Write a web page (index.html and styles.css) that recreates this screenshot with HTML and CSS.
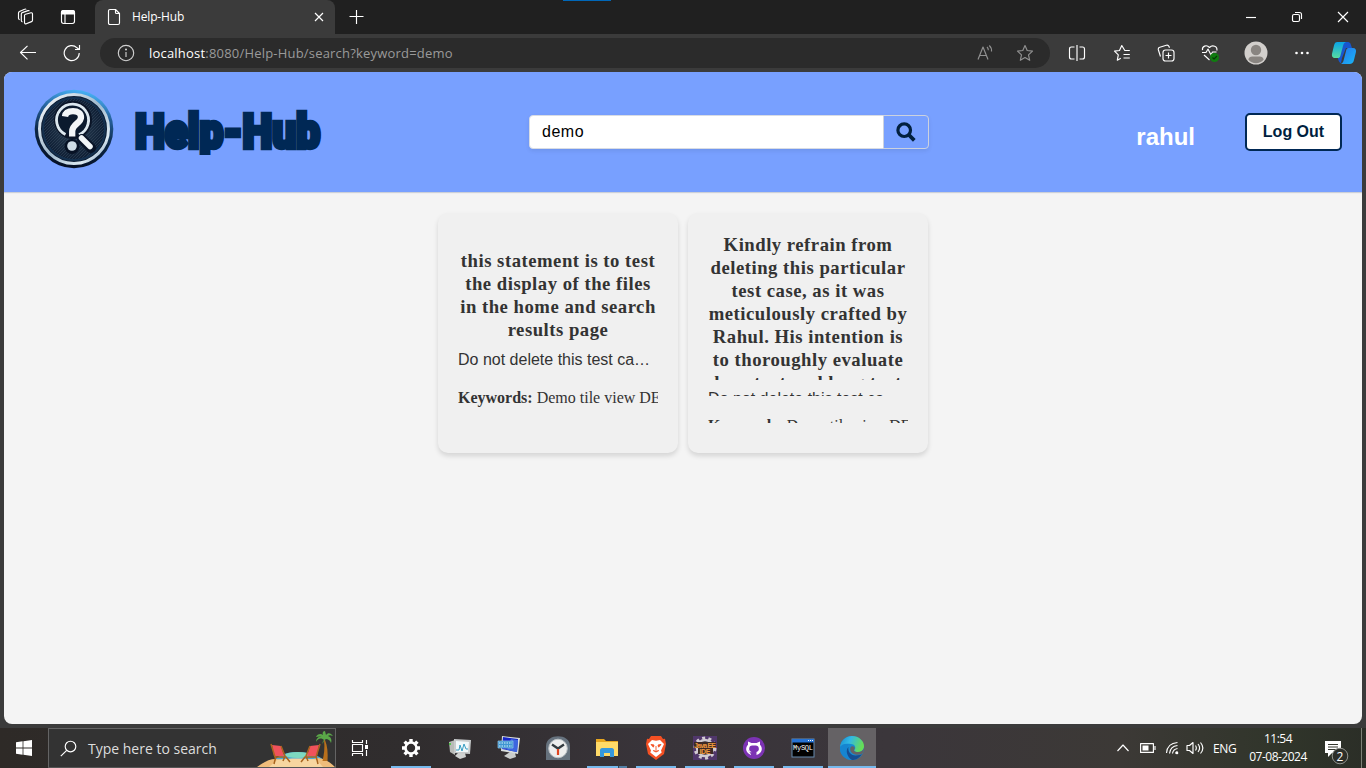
FILE: index.html
```html
<!DOCTYPE html>
<html lang="en">
<head>
<meta charset="utf-8">
<title>Help-Hub</title>
<link rel="stylesheet" href="styles.css">
</head>
<body>
<div class="screen">
  <div class="tabbar">
    <span class="slot w-first"><svg width="18" height="18" viewBox="0 0 18 18" class="line"><path d="M8.500 6.200 14 4.800c.8-.2 1.500.3 1.500 1.200v6.200c0 .7-.4 1.200-1 1.400l-5.200 2.200c-.9.4-1.800-.1-1.800-1.200V7.500c0-.7.4-1.100 1-1.300ZM5.500 13.800c-.8 0-1.200-.5-1.200-1.200V6c0-.7.3-1.200 1-1.400L11 2.600c.6-.2 1.100 0 1.400.5M2.700 11.600C1.900 11.500 1.500 11 1.500 10.300V5c0-.7.3-1.100 1-1.400L7.600 1.200c.6-.3 1.200-.2 1.600.3"/></svg></span>
    <span class="slot w-second"><svg width="16" height="16" viewBox="0 0 16 16" class="line"><rect x="1.500" y="1.500" width="13" height="13" rx="2.200"/><path d="M1.500 3.400C1.500 2 2.200 1.500 3.500 1.500h9c1.300 0 2 .5 2 1.900V5h-13Z" fill="#fff"/><path d="M5 5v9.500"/></svg></span>
    <div class="tab">
      <svg width="14" height="18" viewBox="0 0 14 18" class="line"><path d="M3 1.500h5.500L12.500 5.500V15c0 1-.5 1.500-1.500 1.500H3c-1 0-1.500-.5-1.500-1.500V3c0-1 .5-1.500 1.500-1.500ZM8.500 1.500v3c0 .7.300 1 1 1h3"/></svg>
      <span class="tab-title">Help-Hub</span>
      <svg width="10" height="10" viewBox="0 0 10 10" class="line"><path d="m1 1 8 8M9 1 1 9"/></svg>
    </div>
    <span class="slot w-plus"><svg width="16" height="16" viewBox="0 0 16 16" class="line"><path d="M8.500 1v14M1.500 7.500h14"/></svg></span>
    <div class="accent"></div>
    <div class="window-buttons">
      <span><svg width="12" height="12" viewBox="0 0 12 12" class="line"><path d="M1 6.500h10"/></svg></span>
      <span><svg width="12" height="12" viewBox="0 0 12 12" class="line"><rect x="1.500" y="3.500" width="7" height="7" rx="1.500"/><path d="M4 1.500h4.500c1.300 0 2 .7 2 2V8"/></svg></span>
      <span><svg width="12" height="12" viewBox="0 0 12 12" class="line"><path d="m1 1 10 10M11 1 1 11"/></svg></span>
    </div>
  </div>

  <div class="toolbar">
    <span class="slot w-back"><svg width="18" height="16" viewBox="0 0 18 16" class="line"><path d="M17 7.500H1.500M8.500.8 1.500 7.500l7 6.800"/></svg></span>
    <span class="slot w-reload"><svg width="18" height="18" viewBox="0 0 18 18" class="line"><path d="M16.200 9A7.500 7.500 0 1 1 14 3.800l2 1.700M16.500 1v4.500H12"/></svg></span>
    <div class="address">
      <svg width="18" height="18" viewBox="0 0 18 18" class="line soft"><circle cx="9" cy="9" r="7.700"/><path d="M9 8v5"/><circle cx="9" cy="5.500" r=".5"/></svg>
      <span class="url"><b>localhost</b>:8080/Help-Hub/search?keyword=demo</span>
      <span class="slot w-addr"><svg width="18" height="18" viewBox="0 0 18 18" class="line dim"><path d="M2 15.500 7 3l5 12.500M3.700 11.500h6.500M11 3c1 .9 1.400 1.900 1.300 3.300M13.300 1.500c1.700 1.600 2.500 3.500 2.200 6"/></svg></span>
      <span class="slot w-addr"><svg width="18" height="18" viewBox="0 0 18 18" class="line dim"><path d="m9 1.500 2.200 5 5.300.6-4 3.700 1.200 5.500L9 13.500l-4.700 2.800 1.200-5.500-4-3.700 5.300-.6Z"/></svg></span>
    </div>
    <div class="tools">
      <span class="slot w-split"><svg width="18" height="18" viewBox="0 0 18 18" class="line"><path d="M6.500 3h-3C2.200 3 1.500 3.700 1.500 5v8c0 1.300.7 2 2 2h3M11.500 3h3c1.300 0 2 .7 2 2v8c0 1.300-.7 2-2 2h-3M9 1v16"/></svg></span>
      <span class="slot w-tool"><svg width="18" height="18" viewBox="0 0 18 18" class="line"><path d="M16.800 6.500h-5L8.800 1.500l-2.300 5-5 .6 3.800 3.700-1 5.400 3.500-2M10.500 10.500h6.300M10.500 14h6.300"/></svg></span>
      <span class="slot w-tool"><svg width="18" height="18" viewBox="0 0 18 18" class="line"><rect x="6" y="6" width="11" height="11" rx="2.500"/><path d="M11.500 8.500v6M8.500 11.500h6M3.500 12.500 1.400 6C1 4.500 1.400 3.600 2.800 3.200l6.500-2c1.400-.4 2.200.1 2.700 1.300l.5 1.300"/></svg></span>
      <span class="slot w-tool"><svg width="20" height="20" viewBox="0 0 20 20" class="line"><path d="M2.500 7.200C1.800 3.200 6.500 1.200 9.500 4.500c3-3.300 8.300-1 7.300 3M2 9.500h4L8 6l3 6 1.500-3h4M4 12l5.500 5"/><circle cx="14.500" cy="14.500" r="4.500" fill="#107c10" stroke="none"/><path d="m12.500 14.500 1.500 1.500 3-3" stroke="#073a07"/></svg></span>
      <span class="slot w-person"><svg width="24" height="24" viewBox="0 0 24 24"><circle cx="12" cy="12" r="11.500" fill="#d2cfcc"/><circle cx="12" cy="9" r="5.200" fill="#898581"/><path d="M4.300 18.500c.5-2 2-3 4-3h7.400c2 0 3.500 1 4 3-4 5-11.400 5-15.400 0Z" fill="#898581"/></svg></span>
      <span class="slot w-more"><svg width="16" height="4" viewBox="0 0 16 4" fill="#fff"><circle cx="2.500" cy="2" r="1.300"/><circle cx="8" cy="2" r="1.300"/><circle cx="13.500" cy="2" r="1.300"/></svg></span>
      <span class="slot w-copilot"><svg width="26" height="24" viewBox="0 0 26 24"><defs><linearGradient id="cpA" x2="0" y2="1"><stop stop-color="#08a4e8"/><stop offset="1" stop-color="#58dca0"/></linearGradient><linearGradient id="cpB" x2="1" y2="1"><stop stop-color="#2872ee"/><stop offset="1" stop-color="#18b8f4"/></linearGradient></defs><path d="M12 1h5c1.500 0 2.300 1 2.700 2.200L21 7h-6l-4 10-1 5c-1.500-.3-2-1.300-2.400-2.500L6.500 16Z" fill="#1756cf"/><path d="M6.500 1h8.500c-2 .7-2.500 2.200-3 4L9.300 15c-.4 1.500-1.200 2-2.500 2H4C1 17 .5 14.500 1.200 12L3 4.500C3.600 2 4.500 1 6.500 1Z" fill="url(#cpA)"/><path d="M17 7h5c2.500 0 3.500 2 2.900 4.300l-2 8C22.300 22 21 23 18.500 23H9.500c2-.6 2.700-2 3.200-4l2.300-9c.4-1.800.8-2.600 2-3Z" fill="url(#cpB)"/></svg></span>
    </div>
  </div>

  <main class="page">
    <header class="site-header">
      <div class="brand">
        <svg width="80" height="80" viewBox="0 0 80 80">
          <defs><linearGradient id="rim" x1=".6" y1="0" x2=".4" y2="1"><stop stop-color="#48b4f8"/><stop offset=".3" stop-color="#255f99"/><stop offset=".6" stop-color="#0c2746"/><stop offset="1" stop-color="#050f24"/></linearGradient>
          <linearGradient id="steel" x2="1" y2="1"><stop stop-color="#fff"/><stop offset=".5" stop-color="#9fb9cd"/><stop offset=".8" stop-color="#dce9f2"/><stop offset="1" stop-color="#6288aa"/></linearGradient>
          <radialGradient id="disc"><stop stop-color="#2b4155"/><stop offset="1" stop-color="#0b1a30"/></radialGradient>
          <pattern id="hatch" width="3" height="3" patternUnits="userSpaceOnUse"><path d="M0 3 3 0" stroke="#43566a" stroke-width=".4"/></pattern></defs>
          <circle cx="40" cy="40" r="39.300" fill="url(#rim)"/>
          <circle cx="40" cy="40" r="34.500" fill="url(#disc)" stroke="url(#steel)" stroke-width="3"/>
          <circle cx="40" cy="40" r="31" fill="url(#hatch)" stroke="#14304e" stroke-width="2"/>
          <circle cx="39" cy="31" r="17" fill="#0b1a2e" stroke="#0a1426" stroke-width="4"/>
          <path d="M31.500 45.500A16 16 0 1 1 45 45.800" fill="none" stroke="#dce8ef" stroke-width="2.800"/>
          <path d="m48 50 9 9" stroke="#081326" stroke-width="10" stroke-linecap="round"/>
          <path d="m47.500 49 8.500 8.500" stroke="#f1f5f7" stroke-width="5.500" stroke-linecap="round"/>
          <path d="M31 27.500c.5-4 3.500-5.300 8-5.300 5 0 8 2 8 6 0 6.300-8.800 6.500-8.800 14.300v5" fill="none" stroke="#f3f6f8" stroke-width="6.300"/>
          <circle cx="38" cy="57.500" r="7.500" fill="#071225"/><circle cx="38" cy="57" r="4.800" fill="#cfdde7"/>
        </svg>
        <svg class="wordmark" width="194" height="56" viewBox="0 0 194 56"><text x="5" y="43.200" textLength="185" lengthAdjust="spacingAndGlyphs">Help-Hub</text></svg>
      </div>
      <form class="search">
        <div class="search-field">demo</div>
        <div class="search-button"><svg width="20" height="20" viewBox="0 0 20 20"><circle cx="8.200" cy="8.200" r="6.300" fill="none" stroke="#02203f" stroke-width="3.200"/><path d="m13 13 5.300 5.300" stroke="#02203f" stroke-width="3.800"/></svg></div>
      </form>
      <div class="account"><span class="user">rahul</span><span class="logout">Log Out</span></div>
    </header>
    <section class="results">
      <article class="card">
        <h2>this statement is to test the display of the files in the home and search results page</h2>
        <p class="desc">Do not delete this test ca…</p>
        <p class="keywords"><b>Keywords:</b> Demo tile view DEMO</p>
      </article>
      <article class="card cropped">
        <h2>Kindly refrain from deleting this particular test case, as it was meticulously crafted by Rahul. His intention is to thoroughly evaluate how text and long text</h2>
        <p class="desc">Do not delete this test ca</p>
        <p class="keywords"><b>Keywords:</b> Demo tile view DEMO</p>
      </article>
    </section>
  </main>

  <footer class="taskbar">
    <span class="slot start"><svg width="16" height="16" viewBox="0 0 16 16" fill="#fff"><path d="M0 2.300 6.600 1.300V7.600H0ZM7.400 1.200 16 0v7.600H7.400ZM0 8.400h6.600v6.300L0 13.700ZM7.400 8.400H16V16l-8.600-1.200Z"/></svg></span>
    <div class="task-search">
      <svg width="17" height="17" viewBox="0 0 17 17" class="line"><circle cx="10.500" cy="6.500" r="5.300"/><path d="M6.700 10.300.8 16.200"/></svg>
      <span>Type here to search</span>
      <svg class="beach" width="78" height="38" viewBox="0 0 78 38"><path d="M16 32c6-6 14-9 24-9s22 3 28 9v4H16Z" fill="#4ba9d6"/><ellipse cx="41" cy="26" rx="13" ry="3" fill="#7ed9c0"/><path d="M0 38c7-5 12-8 19-8 12 2 32 2 42-1 8 1 13 5 17 9Z" fill="#efbd7b"/><path d="M20 31c12-2 28-2 40 0l6 7H12Z" fill="#f7d6a0"/><path d="M67 11c1 8 0 15-1.500 21h5c.5-8 0-15-2.500-21Z" fill="#b8701c"/><path d="M67 11c-4-3-6-1-8 2 0-4 3-6 6-5-3-1-4 0-6 0 1-3 5-4 7-2-1-2 0-4 2-4l1 4c2-3 5-2 7 1-3-1-4-1-5 0 3 1 4 4 3 7-1-3-3-4-5-4-2 1-3 3-3 5-1-2 0-3 1-4Z" fill="#5aa848"/><path d="m15 16 9 1 3 10H17ZM62 16l-9 1-3 10h10Z" fill="#f0525b"/><path d="m14 15 4 13h11l4 5M17 35l2-8M24 17l4 10-2 5M63 15l-4 13H48l-4 5M61 35l-2-8M53 17l-4 10 2 5" fill="none" stroke="#a8641e" stroke-width="1.500"/></svg>
    </div>
    <span class="slot task-view"><svg width="18" height="18" viewBox="0 0 18 18" class="line"><path d="M1.500 1v2.500h10V1M1.500 17v-2.500h10V17M1.500 5.500h10v7h-10ZM15.500 1v4M15.500 11v6"/><path d="M14 6h3v4h-3z" fill="#fff" stroke="none"/></svg></span>
    <span class="app open"><svg width="20" height="20" viewBox="0 0 20 20"><circle cx="10" cy="10" r="5.500" fill="none" stroke="#fff" stroke-width="2.600"/><g stroke="#fff" stroke-width="3.400"><path d="M10 1v3M10 16v3M1 10h3M16 10h3M3.600 3.600l2.100 2.100M14.300 14.300l2.100 2.100M3.600 16.400l2.100-2.100M14.300 5.700l2.100-2.100"/></g></svg></span>
    <span class="app"><svg width="24" height="24" viewBox="0 0 24 24"><path d="m1 6 6-2v15l-5-3Z" fill="#b9bbb8"/><path d="M2 7v2" stroke="#35c82d" stroke-width="1.500"/><path d="M10 17h7l1 4-6 2-5-3Z" fill="#d0d2d1"/><path d="m6 3 17 1-1 14L6 17Z" fill="#c8cbcc"/><path d="m8 5 13 1-1 10H8Z" fill="#f1f8fa"/><path d="M8 14h3l1-5 2 6 2-7 2 5h2" fill="none" stroke="#369dc3"/></svg></span>
    <span class="app"><svg width="24" height="24" viewBox="0 0 24 24"><path d="m13 16 5 1 1 4-6 2-6-3Z" fill="#c9cccb"/><path d="m5 0 18 2-2 16L4 15Z" fill="#d9dedd"/><path d="m6 1 15 2-1 13L5 13Z" fill="#1726c7"/><path d="m14 3 7 1-1 12-10-2Z" fill="#3c66df"/><path d="M1 5h15v7H1Z" fill="#3f95d2" stroke="#8fc7ea" stroke-width=".7"/><path d="M2 7h13M2 10h13" stroke="#d7f3fa" stroke-width="1" stroke-dasharray="1.500 1"/></svg></span>
    <span class="app"><svg width="24" height="24" viewBox="0 0 24 24"><path d="M0 10C0-3 24-3 24 10v14H0Z" fill="#66727e"/><circle cx="12" cy="12.500" r="9.300" fill="#eee" stroke="#bec4c8"/><path d="m6 8.500 6 4 6-4" fill="none" stroke="#333b40" stroke-width="2.300"/><path d="M12 13v6" stroke="#df4420" stroke-width="2.200"/></svg></span>
    <span class="app open grouped"><svg width="24" height="20" viewBox="0 0 24 20"><path d="M1 1h8l2 2h12v15H1Z" fill="#e7a61f"/><path d="M1 4h22v14H1Z" fill="#ffda68"/><path d="M5 19v-7c0-1 1-2 2-2h10c1 0 2 1 2 2v7h-4v-4H9v4Z" fill="#3698dc"/></svg></span>
    <span class="app open"><svg width="22" height="24" viewBox="0 0 22 24"><path d="M6 0h10l2 3 2-.3L21 8l-2 10-8 6-8-6L1 8l1-5.300L4 3Z" fill="#f45023"/><path d="m7 4 4 .8 4-.8 4 4-3 6.500.7 2L11 21l-5.700-4.500.7-2L3 8Z" fill="#fff"/><path d="m6 8.500 3 .5-.6 2.200ZM16 8.500l-3 .5.600 2.200ZM11 10v4M8 14.500l3 1.500 3-1.500" fill="#f45023" stroke="#f45023" stroke-width=".9"/></svg></span>
    <span class="app open"><svg width="24" height="24" viewBox="0 0 24 24"><rect width="24" height="24" fill="#50376b"/><circle cx="12" cy="12" r="8" fill="#302a32" stroke="#d1cbd1" stroke-width="2.500"/><circle cx="12" cy="12" r="10" fill="none" stroke="#d1cbd1" stroke-width="3" stroke-dasharray="3 3.280"/><path d="M1 6h22v6h-3v6H5v-6H1Z" fill="#3d2a26"/><text x="1" y="11.500" textLength="22" class="java">Java EE</text><text x="6.500" y="17.500" textLength="11" class="java">IDE</text></svg></span>
    <span class="app open"><svg width="22" height="22" viewBox="0 0 22 22"><circle cx="11" cy="11" r="11" fill="#7c33b4"/><path d="M8.500 18v-2.700c-1.200.2-2.300-.2-2.800-1.500l-1-1M8.500 18C1 15.500 3 9 5 8V4.500L8.500 6h5L17 4.500V8c2 1 4 7.500-3.500 10v-3c2-1 3-2 2-5-.7-1.300-2-1.500-4.500-1.500S7 8.700 6.500 10c-1 3 0 4 2 5Z" fill="#fff"/></svg></span>
    <span class="app open"><svg width="24" height="20" viewBox="0 0 24 20"><rect x="1" y="1" width="22" height="18" fill="#020202" stroke="#668baf"/><path d="M1 1h22v3.500H1Z" fill="#2672d3"/><path d="M17 2.500h1M19 2.500h1M21 2.500h1" stroke="#fff"/><text x="2" y="12" textLength="20" class="console">MySQL</text></svg></span>
    <span class="app open active"><svg width="24" height="24" viewBox="0 0 24 24"><defs><linearGradient id="edgeTop" x2="1" y2=".3"><stop stop-color="#178bcf"/><stop offset=".45" stop-color="#32b8e6"/><stop offset="1" stop-color="#66dd57"/></linearGradient></defs><circle cx="12" cy="12" r="12" fill="#168bd2"/><path d="M0 11C1 4 6 0 12 0c7 0 12 5 12 10 0 4-3 6-6 6-4 0-4-2-3-3 1-2-.5-5-4-5-5 0-10 2-11 3Z" fill="url(#edgeTop)"/><path d="M8 9c-3 5-1 11 4 15C5 24-1 18 0 11c2-3 5-4 11-3-1 0-2 .5-3 1Z" fill="#1685d0"/><path d="M8.500 11c-1 4 2 8.500 7 8.500 3 0 5.500-1 6.500-1.500-3 5-7 6-10 6-5-3-7-10-3.500-13Z" fill="#164d91"/><path d="M14.500 13c-1 1-1 3 3.500 3 3 0 5-1.500 6-4 0 2.500-.8 5-2 6-5 2-10.500 0-11.500-3-.7-2.300 0-4 1-4.500 1.500-.7 4 .5 3 2.500Z" fill="#656265"/></svg></span>
    <div class="tray">
      <span class="slot tray-up"><svg width="14" height="10" viewBox="0 0 14 10" class="line"><path d="m1.500 8 5.500-6 5.500 6"/></svg></span>
      <span class="slot tray-icon"><svg width="16" height="10" viewBox="0 0 16 10" class="line"><rect x=".6" y=".6" width="12.800" height="8.800"/><path d="M15 3v4"/><path d="M2.500 2.500h6v5h-6z" fill="#fff" stroke="none"/></svg></span>
      <span class="slot tray-icon"><svg width="14" height="14" viewBox="0 0 14 14" class="line"><path d="M1.500 12C2 6 6 2 12.500 1.500M4.500 12.500C5 8 8 5 12.500 4.500M7.500 12.500c.3-2.500 2-4.500 5-5M10.500 12.500c.2-1 .8-1.700 2-2"/><circle cx="12" cy="12" r="1.300" fill="#fff" stroke="none"/></svg></span>
      <span class="slot tray-icon sound"><svg width="18" height="14" viewBox="0 0 18 14" class="line"><path d="M1 4.500h2.500L7 1.500v11l-3.500-3H1ZM9.500 4.500c1 1.500 1 3.500 0 5M12 3c2 2.500 2 5.500 0 8M14.500 1.500c3 3.500 3 7.500 0 11"/></svg></span>
      <span class="lang">ENG</span>
      <span class="clock"><span>11:54</span><span>07-08-2024</span></span>
      <span class="notice"><svg width="28" height="28" viewBox="0 0 28 28"><path d="M1 2h16v12H8l-4 4v-4H1Z" fill="#fff"/><path d="M4 5.500h10M4 8h10M4 10.500h8" stroke="#34372d"/><circle cx="16" cy="17" r="7.800" fill="#2c2e29" stroke="#92948f"/><text x="16" y="21.500" text-anchor="middle" class="count">2</text></svg></span>
      <span class="desktop-edge"></span>
    </div>
  </footer>
</div>
</body>
</html>
```
FILE: styles.css
```css
* { box-sizing: border-box; }
body { margin: 0; overflow: hidden; background: #3b3b3b; font-family: "Liberation Sans", Arial, sans-serif; }
svg { display: block; flex: none; }
.screen { width: 1366px; height: 768px; display: flex; flex-direction: column; background: #3b3b3b; }
.slot { display: flex; align-items: center; justify-content: center; flex: none; height: 100%; }
.line { fill: none; stroke: #fff; stroke-width: 1.15; stroke-linejoin: round; }
.soft { stroke: #d0d0d0; }
.dim { stroke: #919191; }

.tabbar { height: 34px; display: flex; background: #202020; color: #fff; }
.w-first { width: 52px; }
.w-second { width: 32px; margin-right: 11px; }
.tab { width: 240px; display: flex; align-items: center; padding: 0 11px 0 12px; background: #3b3b3b; border-radius: 8px 8px 0 0; }
.tab-title { flex: 1; padding: 0 0 2px 11px; font: 12px "Open Sans", sans-serif; letter-spacing: -.15px; }
.w-plus { width: 42px; }
.accent { width: 48px; height: 1px; margin-left: 186px; background: #0067b8; }
.window-buttons { display: flex; margin-left: auto; }
.window-buttons span { width: 46px; display: flex; align-items: center; justify-content: center; }

.toolbar { height: 38px; display: flex; align-items: center; }
.w-back { width: 56px; }
.w-reload { width: 32px; margin-right: 12px; }
.address { flex: none; width: 950px; height: 30px; display: flex; align-items: center; border-radius: 15px; background: #2b2b2b; padding: 0 5px 0 17px; }
.url { flex: 1; margin-left: 14px; color: #9a9a9a; font: 13px "Open Sans", sans-serif; letter-spacing: .2px; }
.url b { color: #fff; font-weight: 400; }
.w-addr { width: 40px; }
.tools { display: flex; height: 100%; }
.w-split { width: 50px; padding-left: 4px; }
.w-tool { width: 44px; }
.w-person { width: 48px; }
.w-more { width: 44px; }
.w-copilot { width: 39px; }

.page { height: 652px; margin: 0 4px; overflow: hidden; border-radius: 8px; background: #f4f4f4; }
.site-header { height: 120px; display: flex; align-items: center; padding: 0 20px 0 30px; background: #78a0ff; box-shadow: 0 1px 1px #ccd0d8; }
.brand { width: 495px; display: flex; align-items: center; margin-top: -7px; }
.wordmark { margin: 9px 0 0 16px; clip-path: inset(0 0 6px 0); }
.wordmark text { fill: #002855; stroke: #002855; stroke-width: 4.5px; font: 900 49px Roboto, sans-serif; }
.search { display: flex; width: 400px; height: 34px; border-radius: 4px; box-shadow: 0 2px 4px rgba(0,0,0,.08); }
.search-field { width: 355px; padding: 0 12px; border: 1px solid #d8dce4; border-radius: 4px 0 0 4px; background: #fff; color: #000; font-size: 16px; line-height: 32px; letter-spacing: .5px; }
.search-button { width: 46px; margin-left: -1px; display: flex; align-items: center; justify-content: center; border: 1px solid #ccd2df; border-radius: 0 4px 4px 0; }
.account { display: flex; align-items: center; margin-left: auto; }
.user { margin: 9px 50px 0 0; color: #fff; font-size: 24px; font-weight: 700; }
.logout { width: 97px; height: 38px; border: 2px solid #002855; border-radius: 5px; background: #fff; color: #001f3f; font-size: 16px; font-weight: 700; line-height: 34px; text-align: center; }

.results { display: flex; justify-content: center; gap: 10px; padding-top: 21px; }
.card { width: 240px; height: 240px; padding: 36px 20px 20px; overflow: hidden; border-radius: 10px; background: #f0f0f0; color: #333; box-shadow: 0 3px 5px rgba(0,0,0,.13); }
.card h2 { height: 92px; margin: 0; overflow: hidden; text-align: center; font: 700 18.72px/23px "Liberation Serif", serif; letter-spacing: .5px; }
.desc { height: 24px; margin: 7px 0 0; overflow: hidden; white-space: nowrap; font-size: 16px; line-height: 24px; }
.keywords { height: 24px; margin: 14px 0 0; overflow: hidden; white-space: nowrap; font: 16px/24px "Liberation Serif", serif; }
.cropped { padding-top: 20px; }
.card.cropped h2 { height: 147px; }
.cropped .desc { height: 9px; line-height: 24px; }
.cropped .keywords { height: 10px; margin-top: 17px; line-height: 26px; }

.taskbar { height: 40px; margin-top: 4px; display: flex; background: linear-gradient(90deg, #2e2a27, #302d2e 30%, #39343a 48%, #3b363b 65%, #3c3936 82%, #30352a 94%, #2b2e27); color: #fff; font-family: "Open Sans", sans-serif; }
.start { width: 48px; }
.task-search { width: 288px; display: flex; align-items: center; padding-left: 11px; border: 1px solid #646464; border-bottom-color: #555; background: #333; color: #ddd; font-size: 14px; }
.task-search span { margin-left: 11px; white-space: nowrap; flex: 1; }
.beach { align-self: flex-end; }
.task-view { width: 48px; margin-right: 3px; }
.app { width: 48px; height: 40px; margin-right: 1px; display: flex; align-items: center; justify-content: center; }
.open { background: linear-gradient(#76b9ed, #76b9ed) 4px 38px / 40px 2px no-repeat; }
.grouped { background: linear-gradient(90deg, #76b9ed 31px, #354453 31px 32px, #527fa5 32px) 4px 38px / 40px 2px no-repeat; }
.active { background: linear-gradient(#76b9ed, #76b9ed) 0 38px / 48px 2px no-repeat, #656265; }
.java { fill: #ed983e; font: 700 7px "Liberation Sans", sans-serif; }
.console { fill: #fff; font: 7px "Liberation Mono", monospace; }
.tray { display: flex; align-items: center; margin-left: auto; height: 40px; }
.tray-up { width: 24px; }
.tray-icon { width: 24px; padding-left: 2px; }
.sound { padding-left: 0; }
.lang { width: 35px; padding-left: 6px; font-size: 12px; letter-spacing: -.4px; }
.clock { width: 72px; display: flex; flex-direction: column; align-items: center; margin: 0 9px 0 0; font-size: 12px; line-height: 18px; letter-spacing: -.5px; }
.notice { width: 38px; padding: 9px 0 0 1px; }
.count { fill: #fff; font: 12px "Open Sans", sans-serif; }
.desktop-edge { width: 1px; height: 40px; margin-right: 4px; background: #7d8177; }
```
